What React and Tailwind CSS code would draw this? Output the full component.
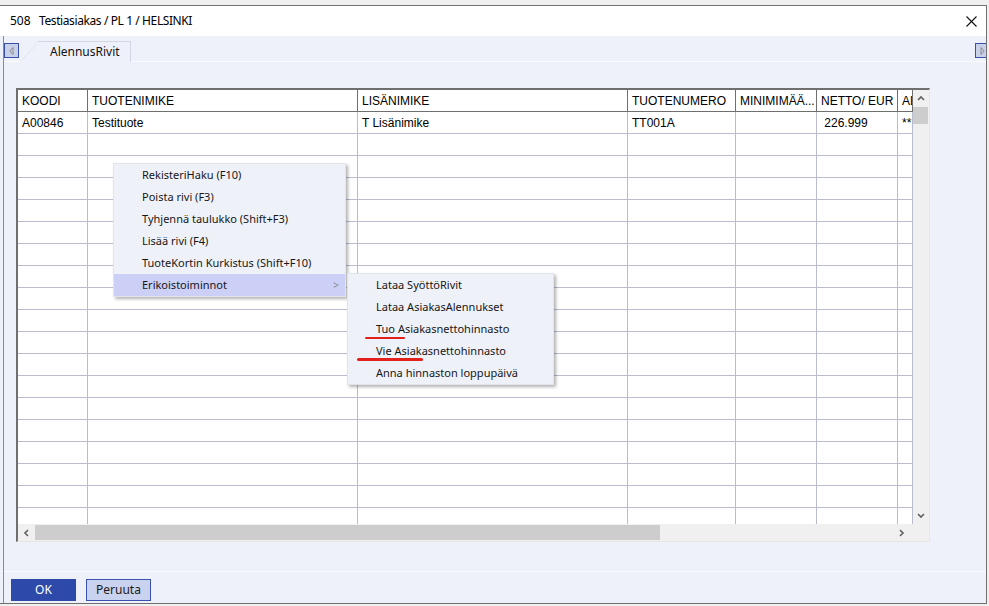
import React from 'react';

const cols = [
  { key: 'koodi', label: 'KOODI', w: 'w-[70px]' },
  { key: 'nimi', label: 'TUOTENIMIKE', w: 'w-[270px]' },
  { key: 'lisa', label: 'LISÄNIMIKE', w: 'w-[270px]' },
  { key: 'nro', label: 'TUOTENUMERO', w: 'w-[108px]' },
  { key: 'min', label: 'MINIMIMÄÄ...', w: 'w-[81px]' },
  { key: 'netto', label: 'NETTO/ EUR', w: 'w-[81px]' },
  { key: 'al', label: 'AL', w: 'flex-1' },
];

const rows = [
  { koodi: 'A00846', nimi: 'Testituote', lisa: 'T Lisänimike', nro: 'TT001A', min: '', netto: ' 226.999', al: '**' },
];

const menuItems = [
  'RekisteriHaku (F10)',
  'Poista rivi (F3)',
  'Tyhjennä taulukko (Shift+F3)',
  'Lisää rivi (F4)',
  'TuoteKortin Kurkistus (Shift+F10)',
];

const subItems = [
  'Lataa SyöttöRivit',
  'Lataa AsiakasAlennukset',
  'Tuo Asiakasnettohinnasto',
  'Vie Asiakasnettohinnasto',
  'Anna hinnaston loppupäivä',
];

const ui = { fontFamily: '"Noto Sans", "Open Sans", sans-serif' };
const grid = { fontFamily: '"Liberation Sans", Arial, sans-serif' };

function Chevron({ dir }) {
  const d = {
    up: 'M1 5 L4 2 L7 5',
    down: 'M1 2 L4 5 L7 2',
    left: 'M5 1 L2 4 L5 7',
    right: 'M2 1 L5 4 L2 7',
  }[dir];
  return (
    <svg width="8" height="8" viewBox="0 0 8 8">
      <path d={d} fill="none" stroke="#606060" strokeWidth="1.6" />
    </svg>
  );
}

export default function App() {
  const blank = Array.from({ length: 18 });

  return (
    <div className="w-[989px] h-[606px] bg-[#f0f0f0] pt-[5px] overflow-hidden relative" style={ui}>
      <div className="w-[987px] h-[599px] border-t border-r border-b border-[#707070] bg-[#eef1f9] flex flex-col">
        {/* title bar */}
        <div className="h-[30px] bg-white flex items-center text-[12px] text-black shrink-0">
          <span className="ml-[10px] w-[29px]">508</span>
          <span className="tracking-[-0.4px]">Testiasiakas / PL 1 / HELSINKI</span>
          <svg className="ml-auto mr-[9px]" width="11" height="11" viewBox="0 0 11 11">
            <path d="M0.5 0.5 L10.5 10.5 M10.5 0.5 L0.5 10.5" stroke="#111" strokeWidth="1.1" />
          </svg>
        </div>

        <div className="flex-1 flex pl-[3px]">
          <div className="flex-1 flex flex-col border-l border-[#8a8a8a]">
            {/* tab strip */}
            <div className="h-[26px] flex items-start border-b border-[#fafbfe] shrink-0">
              <div className="mt-[7px] w-[15px] h-[15px] border border-[#3a4fab] bg-[#c9d0ea] flex items-center justify-center">
                <svg width="5" height="8" viewBox="0 0 5 8"><path d="M4 0.5 L0.8 4 L4 7.5 Z" fill="none" stroke="#8a8a8a" /></svg>
              </div>
              <div className="ml-[1px] mt-[5px] h-[21px] flex items-stretch relative z-10">
                <svg width="18" height="21" viewBox="0 0 18 21">
                  <path d="M0.5 21 L18 1.5" stroke="#d3d7e2" fill="none" />
                  <path d="M0.5 21 L18 1.5 L18 21 Z" fill="#eef1f9" />
                </svg>
                <div className="border-t border-r border-[#d3d7e2] pl-[12px] pr-[10px] text-[12px] text-[#111] flex items-center bg-[#eef1f9]">
                  AlennusRivit
                </div>
              </div>
              <div className="ml-auto mt-[7px] w-[11px] overflow-hidden">
                <div className="w-[15px] h-[15px] border border-[#3a4fab] bg-[#c9d0ea] flex items-center justify-center">
                  <svg width="5" height="8" viewBox="0 0 5 8"><path d="M1 0.5 L4.2 4 L1 7.5 Z" fill="none" stroke="#8a8a8a" /></svg>
                </div>
              </div>
            </div>

            {/* content */}
            <div className="flex-1 border-b border-[#fafbfe]">
              <div className="ml-[12px] mt-[26px] w-[914px] h-[454px] border-t-2 border-l-2 border-[#6f6f6f] border-r border-b border-r-[#e6e6e6] border-b-[#e6e6e6] flex flex-col bg-white" style={grid}>
                <div className="h-[434px] flex">
                  <div className="flex-1 overflow-hidden text-[12px] text-black">
                    <div className="h-[22px] flex border-b border-[#6f6f6f]">
                      {cols.map((c) => (
                        <div key={c.key} className={`${c.w} shrink-0 border-r border-[#6f6f6f] pl-[4px] flex items-center whitespace-nowrap overflow-hidden`}>
                          {c.label}
                        </div>
                      ))}
                    </div>
                    {rows.map((r, i) => (
                      <div key={i} className="h-[22px] flex border-b border-[#b8bccd]">
                        {cols.map((c) => (
                          <div key={c.key} className={`${c.w} shrink-0 border-r border-[#b8bccd] pl-[4px] flex items-center whitespace-pre overflow-hidden`}>
                            {r[c.key]}
                          </div>
                        ))}
                      </div>
                    ))}
                    {blank.map((_, i) => (
                      <div key={i} className="h-[22px] flex border-b border-[#b8bccd]">
                        {cols.map((c) => (
                          <div key={c.key} className={`${c.w} shrink-0 border-r border-[#b8bccd]`} />
                        ))}
                      </div>
                    ))}
                  </div>
                  {/* vertical scrollbar */}
                  <div className="w-[16px] bg-[#f0f0f0] flex flex-col items-center">
                    <div className="h-[17px] flex items-center justify-center"><Chevron dir="up" /></div>
                    <div className="w-[15px] h-[17px] bg-[#cdcdcd] mr-[1px]" />
                    <div className="flex-1" />
                    <div className="h-[17px] flex items-center justify-center"><Chevron dir="down" /></div>
                  </div>
                </div>
                {/* horizontal scrollbar */}
                <div className="h-[17px] bg-[#f0f0f0] flex items-center">
                  <div className="w-[17px] flex items-center justify-center"><Chevron dir="left" /></div>
                  <div className="w-[625px] h-[15px] bg-[#cdcdcd]" />
                  <div className="flex-1" />
                  <div className="w-[17px] mr-[19px] flex items-center justify-center"><Chevron dir="right" /></div>
                </div>
              </div>
            </div>

            {/* buttons */}
            <div className="h-[31px] flex items-start pt-[7px] pl-[7px] gap-[10px] shrink-0">
              <button className="w-[65px] h-[22px] bg-[#2d4aab] text-white text-[12px] flex items-center justify-center">OK</button>
              <button className="w-[65px] h-[22px] bg-[#c9d2ee] border border-[#3a51ad] text-[#1a1a1a] text-[12px] flex items-center justify-center">Peruuta</button>
            </div>
          </div>
        </div>
      </div>

      {/* context menu */}
      <div className="absolute left-[113px] top-[163px] w-[233px] border border-[#e2e4ec] bg-[#eff1f9] shadow-[2px_2px_3px_rgba(0,0,0,0.3)] text-[11px] text-[#161616]">
        {menuItems.map((m) => (
          <div key={m} className="h-[22px] flex items-center pl-[28px]">{m}</div>
        ))}
        <div className="h-[22px] flex items-center pl-[28px] pr-[6px] bg-[#ccd0f6]">
          <span>Erikoistoiminnot</span>
          <span className="ml-auto text-[#888] text-[10px]">&gt;</span>
        </div>
      </div>

      {/* submenu */}
      <div className="absolute left-[347px] top-[273px] w-[207px] border border-[#e2e4ec] bg-[#eff1f9] shadow-[2px_2px_3px_rgba(0,0,0,0.3)] text-[11px] text-[#161616]">
        {subItems.map((m) => (
          <div key={m} className="h-[22px] flex items-center pl-[28px]">{m}</div>
        ))}
      </div>

      {/* red markings */}
      <div className="absolute left-[365px] top-[337px] w-[40px] h-[2px] bg-[#e3201c] rounded-full" />
      <div className="absolute left-[357px] top-[358px] w-[66px] h-[3px] bg-[#e3201c] rounded-full" />
    </div>
  );
}
